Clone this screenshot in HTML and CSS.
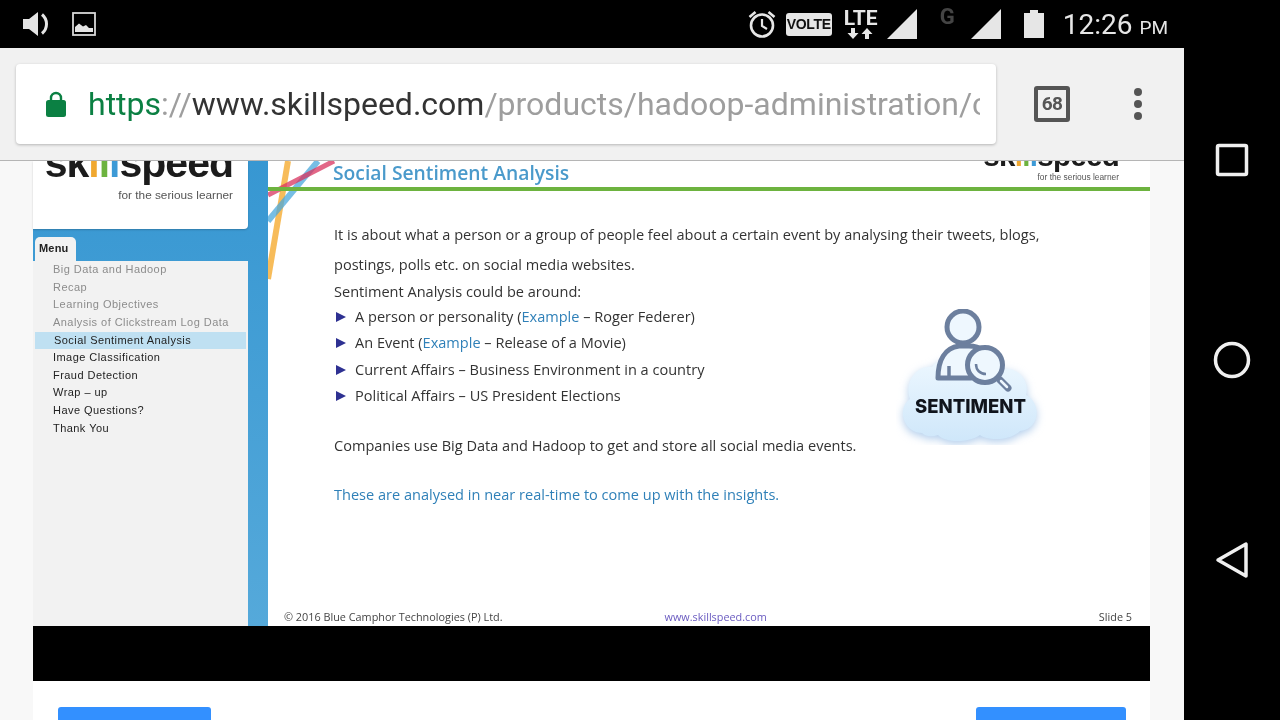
FILE: index.html
```html
<!DOCTYPE html>
<html lang="en">
<head>
    <meta charset="UTF-8">
    <meta name="viewport" content="width=device-width, initial-scale=1.0">
    <title>Skillspeed - Hadoop Administration</title>
    <link rel="stylesheet" href="styles.css">
</head>
<body>
    <div class="status-bar">
        <div class="status-left">
            <svg width="28" height="26" viewBox="0 0 28 26">
                <path d="M1 8h6l9-7v24l-9-7H1z" fill="#e4e4e4"/>
                <path d="M20 3.500c6 5 6 14 0 19" fill="none" stroke="#e4e4e4" stroke-width="3"/>
            </svg>
            <svg width="24" height="24" viewBox="0 0 24 24">
                <rect x="1" y="1" width="22" height="22" fill="none" stroke="#d8d8d8" stroke-width="1.800"/>
                <path d="M3 20v-5l4-3.500 4 3 3-1.500 3 3h4v4z" fill="#e4e4e4"/>
            </svg>
        </div>
        <div class="status-right">
            <svg class="ic-alarm" width="28" height="28" viewBox="0 0 28 28">
                <circle cx="14" cy="15.500" r="11" fill="none" stroke="#e6e6e6" stroke-width="2.600"/>
                <path d="M14 9v7l5 3" fill="none" stroke="#e6e6e6" stroke-width="2.200"/>
                <path d="M1.500 7l6-5M26.500 7l-6-5" fill="none" stroke="#e6e6e6" stroke-width="2.600"/>
            </svg>
            <span class="volte">VOLTE</span>
            <div class="lte">
                <span class="lte-text">LTE</span>
                <svg width="30" height="11" viewBox="0 0 30 11">
                    <path d="M5 0h4v5h3.500L7 11 1.500 5H5z" fill="#e6e6e6"/>
                    <path d="M23 11h-4V6h-3.500L21 0l5.500 6H23z" fill="#e6e6e6"/>
                </svg>
            </div>
            <svg class="ic-signal" width="30" height="30" viewBox="0 0 30 30">
                <path d="M0 30L30 0v30z" fill="#e6e6e6"/>
            </svg>
            <span class="net-g">G</span>
            <svg class="ic-signal2" width="30" height="30" viewBox="0 0 30 30">
                <path d="M0 30L30 0v30z" fill="#e6e6e6"/>
            </svg>
            <svg class="ic-battery" width="20" height="28" viewBox="0 0 20 28">
                <path d="M6 0h8v3h6v25H0V3h6z" fill="#e6e6e6"/>
            </svg>
            <span class="clock">12:26 <small>PM</small></span>
        </div>
    </div>

    <div class="main">
        <div class="browser">
            <div class="toolbar">
                <div class="omnibox">
                    <svg class="ic-lock" width="20" height="26" viewBox="0 0 20 26">
                        <path d="M5 10V7a5 5 0 0 1 10 0v3" fill="none" stroke="#0b8043" stroke-width="2.400"/>
                        <rect y="9" width="20" height="17" rx="2.500" fill="#0b8043"/>
                    </svg>
                    <div class="url"><span class="url-green">https</span><span class="url-grey">://</span>www.skillspeed.com<span class="url-grey">/products/hadoop-administration/c</span></div>
                </div>
                <div class="tab-count">68</div>
                <div class="menu-dots"><i></i><i></i><i></i></div>
            </div>

            <div class="page">
                <div class="player">
                    <div class="sidebar">
                        <div class="side-logo">
                            <div class="logo-big">sk<b class="c1">i</b><b class="c2">l</b><b class="c3">l</b>speed</div>
                            <div class="tagline">for the serious learner</div>
                        </div>
                        <div class="menu-tab">Menu</div>
                        <ul class="menu-list">
                            <li class="seen">Big Data and Hadoop</li>
                            <li class="seen">Recap</li>
                            <li class="seen">Learning Objectives</li>
                            <li class="seen">Analysis of Clickstream Log Data</li>
                            <li class="active">Social Sentiment Analysis</li>
                            <li>Image Classification</li>
                            <li>Fraud Detection</li>
                            <li>Wrap – up</li>
                            <li>Have Questions?</li>
                            <li>Thank You</li>
                        </ul>
                    </div>

                    <div class="slide">
                        <svg class="slide-lines" width="80" height="120" viewBox="0 0 80 120">
                            <path d="M20 0L0 118" stroke="#f5a623" stroke-width="6" opacity="0.75"/>
                            <path d="M50 0L0 60" stroke="#4aa8dc" stroke-width="6" opacity="0.75"/>
                            <path d="M66 0L0 34" stroke="#d9345f" stroke-width="5" opacity="0.75"/>
                        </svg>
                        <div class="slide-head">
                            <h1>Social Sentiment Analysis</h1>
                            <div class="head-logo">
                                <div class="logo-small">sk<b class="c1">i</b><b class="c2">l</b><b class="c3">l</b>speed</div>
                                <div class="tagline-small">for the serious learner</div>
                            </div>
                        </div>
                        <div class="slide-body">
                            <p class="intro">It is about what a person or a group of people feel about a certain event by analysing their tweets, blogs,<br>postings, polls etc. on social media websites.</p>
                            <p class="lead">Sentiment Analysis could be around:</p>
                            <ul class="points">
                                <li>A person or personality (<span class="blue">Example</span> – Roger Federer)</li>
                                <li>An Event (<span class="blue">Example</span> – Release of a Movie)</li>
                                <li>Current Affairs – Business Environment in a country</li>
                                <li>Political Affairs – US President Elections</li>
                            </ul>
                            <p class="companies">Companies use Big Data and Hadoop to get and store all social media events.</p>
                            <p class="insights">These are analysed in near real-time to come up with the insights.</p>

                            <svg class="sentiment" width="150" height="136" viewBox="0 0 150 136">
                                <defs>
                                    <linearGradient id="cloudFill" x1="0" y1="0" x2="0" y2="1">
                                        <stop offset="0" stop-color="#eef8ff"/>
                                        <stop offset="1" stop-color="#cfe7fa"/>
                                    </linearGradient>
                                    <filter id="soft" x="-20%" y="-20%" width="140%" height="140%">
                                        <feGaussianBlur stdDeviation="4"/>
                                    </filter>
                                </defs>
                                <path d="M26 127C8 127 0 103 14 93C8 77 20 59 36 61C44 47 90 43 108 63C122 61 134 75 130 89C146 97 144 123 124 125C114 135 92 135 84 129C72 137 50 137 42 129C36 131 30 131 26 127Z" fill="#b4cfec" filter="url(#soft)"/>
                                <path d="M26 124C8 124 0 100 14 90C8 74 20 56 36 58C44 44 90 40 108 60C122 58 134 72 130 86C146 94 144 120 124 122C114 132 92 132 84 126C72 134 50 134 42 126C36 128 30 128 26 124Z" fill="url(#cloudFill)"/>
                                <circle cx="67" cy="18" r="16" fill="#eef7fe" stroke="#6c7f9e" stroke-width="5"/>
                                <path d="M42 69c0-18 7-30 21-32h10c6 0 10 1 14 4-8 5-13 14-12 28z" fill="#eef7fe" stroke="#6c7f9e" stroke-width="5" stroke-linejoin="round"/>
                                <path d="M53 69v-12" stroke="#6c7f9e" stroke-width="3.500"/>
                                <circle cx="89" cy="56" r="17.500" fill="#eef7fe" stroke="#6c7f9e" stroke-width="5"/>
                                <path d="M80 55c0 6 4 10 10 10" fill="none" stroke="#6c7f9e" stroke-width="2.500"/>
                                <path d="M104 71l8 8" stroke="#6c7f9e" stroke-width="7" stroke-linecap="round"/>
                                <path d="M105 72l6 6" stroke="#eef7fe" stroke-width="2.500" stroke-linecap="round"/>
                                <text class="sentiment-text" x="74.500" y="104" text-anchor="middle" textLength="111" lengthAdjust="spacingAndGlyphs">SENTIMENT</text>
                            </svg>
                        </div>
                        <div class="slide-foot">
                            <span class="copy">© 2016 Blue Camphor Technologies (P) Ltd.</span>
                            <span class="site">www.skillspeed.com</span>
                            <span class="slide-no">Slide 5</span>
                        </div>
                    </div>
                </div>
                <div class="player-bar"></div>
                <div class="actions">
                    <div class="btn btn-left"></div>
                    <div class="btn btn-right"></div>
                </div>
            </div>
        </div>

        <div class="nav-bar">
            <svg width="34" height="34" viewBox="0 0 34 34">
                <rect x="2.500" y="2.500" width="29" height="29" rx="1.500" fill="none" stroke="#f0f0f0" stroke-width="3.500"/>
            </svg>
            <svg width="38" height="38" viewBox="0 0 38 38">
                <circle cx="19" cy="19" r="16.500" fill="none" stroke="#f0f0f0" stroke-width="3.500"/>
            </svg>
            <svg width="34" height="38" viewBox="0 0 34 38">
                <path d="M31 3v32L3 19z" fill="none" stroke="#f0f0f0" stroke-width="3.500" stroke-linejoin="round"/>
            </svg>
        </div>
    </div>
</body>
</html>
```

FILE: styles.css
```css
body {
    margin: 0;
    width: 1280px;
    height: 720px;
    overflow: hidden;
    background-color: #000;
    font-family: Roboto, sans-serif;
}

/* status bar */

.status-bar {
    height: 48px;
    display: flex;
    justify-content: space-between;
    align-items: center;
    padding: 0 112px 0 22px;
    color: #e6e6e6;
}

.status-left {
    display: flex;
    align-items: center;
    gap: 22px;
}

.status-right {
    display: flex;
    align-items: center;
}

.ic-alarm {
    margin-right: 10px;
}

.volte {
    width: 46px;
    height: 23px;
    background-color: #e6e6e6;
    border-radius: 3px;
    color: #111;
    font: bold 14px/23px "Liberation Sans", sans-serif;
    letter-spacing: -0.3px;
    text-align: center;
}

.lte {
    width: 34px;
    margin-left: 12px;
    display: flex;
    flex-direction: column;
    align-items: center;
}

.lte-text {
    font: bold 21px/19px "Roboto", sans-serif;
}

.ic-signal {
    margin-left: 9px;
}

.net-g {
    width: 16px;
    margin: -14px 0 0 23px;
    color: #444;
    font: bold 22px/22px "Roboto", sans-serif;
}

.ic-signal2 {
    margin-left: 15px;
}

.ic-battery {
    margin-left: 23px;
}

.clock {
    margin-left: 19px;
    font-size: 28px;
    font-weight: 400;
    white-space: nowrap;
}

.clock small {
    font-size: 19px;
}

/* browser */

.main {
    display: flex;
    height: 672px;
}

.browser {
    width: 1184px;
    display: flex;
    flex-direction: column;
}

.toolbar {
    height: 112px;
    flex-shrink: 0;
    display: flex;
    align-items: center;
    padding-left: 16px;
    background-color: #f1f1f1;
    border-bottom: 1px solid #b5b5b5;
}

.omnibox {
    width: 980px;
    height: 80px;
    box-sizing: border-box;
    display: flex;
    align-items: center;
    padding: 0 16px 0 30px;
    background-color: #fff;
    border-radius: 4px;
    box-shadow: 0 1px 3px rgba(0, 0, 0, 0.25);
}

.ic-lock {
    flex-shrink: 0;
    margin-right: 22px;
}

.url {
    overflow: hidden;
    white-space: nowrap;
    font-size: 32px;
    color: #333;
}

.url-green {
    color: #0b8043;
}

.url-grey {
    color: #9e9e9e;
}

.tab-count {
    width: 36px;
    height: 36px;
    box-sizing: border-box;
    margin-left: 38px;
    border: 4px solid #555;
    border-radius: 3px;
    color: #555;
    font: bold 19px/28px "Roboto", sans-serif;
    letter-spacing: -0.6px;
    text-align: center;
}

.menu-dots {
    margin-left: 64px;
    display: flex;
    flex-direction: column;
    gap: 4px;
}

.menu-dots i {
    width: 8px;
    height: 8px;
    border-radius: 50%;
    background-color: #555;
}

/* page */

.page {
    flex: 1;
    display: flex;
    flex-direction: column;
    padding: 0 34px 0 33px;
    background-color: #f8f8f8;
}

.player {
    height: 465px;
    flex-shrink: 0;
    display: flex;
}

.player-bar {
    height: 55px;
    flex-shrink: 0;
    background-color: #000;
}

.actions {
    flex: 1;
    display: flex;
    justify-content: space-between;
    padding: 26px 24px 0 25px;
    background-color: #fff;
}

.btn {
    background-color: #3390ff;
    border-radius: 3px 3px 0 0;
}

.btn-left {
    width: 153px;
}

.btn-right {
    width: 150px;
}

/* player sidebar */

.sidebar {
    width: 235px;
    flex-shrink: 0;
    padding-right: 20px;
    box-sizing: border-box;
    display: flex;
    flex-direction: column;
    background: linear-gradient(#3797d2, #55a9da);
}

.side-logo {
    height: 68px;
    flex-shrink: 0;
    box-sizing: border-box;
    overflow: hidden;
    display: flex;
    flex-direction: column;
    justify-content: flex-end;
    align-items: flex-end;
    padding: 0 15px 27px 0;
    background-color: #fff;
    border-radius: 0 0 4px 0;
    box-shadow: 0 1px 2px rgba(0, 0, 0, 0.2);
}

.logo-big {
    font: bold 41px/36px "Liberation Sans", sans-serif;
    letter-spacing: -1px;
    color: #1c1c1c;
    white-space: nowrap;
}

.logo-big b,
.logo-small b {
    font-weight: bold;
}

.c1 {
    color: #f0a830;
}

.c2 {
    color: #6db33f;
}

.c3 {
    color: #3d9ad6;
}

.tagline {
    margin-top: 7px;
    font: 11.800px/14px "Liberation Sans", sans-serif;
    color: #555;
}

.menu-tab {
    width: 41px;
    height: 24px;
    box-sizing: border-box;
    margin: 8px 0 0 2px;
    padding: 3px 0 0 4px;
    background-color: #f2f2f2;
    border-radius: 5px 5px 0 0;
    color: #222;
    font: bold 11px/16px "Liberation Sans", sans-serif;
    letter-spacing: 0.2px;
}

.menu-list {
    flex: 1;
    list-style: none;
    margin: 0;
    padding: 0 2px 0 2px;
    background-color: #f2f2f2;
    font: 11px/17.650px "Liberation Sans", sans-serif;
    letter-spacing: 0.45px;
    color: #222;
}

.menu-list li {
    height: 17.650px;
    padding-left: 18px;
    white-space: nowrap;
}

.menu-list .seen {
    color: #8c8c8c;
}

.menu-list .active {
    background-color: #bfe0f2;
    padding-left: 19px;
}

/* slide */

.slide {
    flex: 1;
    position: relative;
    display: flex;
    flex-direction: column;
    background-color: #fff;
    font-family: "Open Sans", sans-serif;
    color: #333;
}

.slide-lines {
    position: absolute;
    left: 0;
    top: 0;
    mix-blend-mode: multiply;
}

.slide-head {
    height: 30px;
    flex-shrink: 0;
    box-sizing: border-box;
    display: flex;
    justify-content: space-between;
    padding: 0 31px 0 65px;
    border-bottom: 4px solid #6db33f;
    position: relative;
}

.slide-head h1 {
    margin: 0;
    font-size: 19.300px;
    line-height: 24px;
    font-weight: 600;
    color: #4a9acb;
}

.head-logo {
    overflow: hidden;
    display: flex;
    flex-direction: column;
    justify-content: flex-end;
    align-items: flex-end;
    padding-bottom: 4px;
}

.logo-small {
    font: bold 29.500px/24px "Liberation Sans", sans-serif;
    letter-spacing: -0.7px;
    color: #1c1c1c;
    white-space: nowrap;
}

.tagline-small {
    margin-top: 4px;
    font: 8.400px/11px "Liberation Sans", sans-serif;
    color: #555;
}

.slide-body {
    flex: 1;
    position: relative;
    padding: 28px 0 0 66px;
    font-size: 14.560px;
}

.slide-body p {
    margin: 0;
}

.slide-body .intro {
    line-height: 30px;
}

.slide-body .lead {
    line-height: 24px;
}

.points {
    list-style: none;
    margin: 0;
    padding: 0;
}

.points li {
    height: 26.300px;
    line-height: 26px;
    padding-left: 21px;
    position: relative;
}

.points li::before {
    content: "";
    position: absolute;
    left: 2px;
    top: 9px;
    border-left: 10px solid #2e3192;
    border-top: 5px solid transparent;
    border-bottom: 5px solid transparent;
}

.blue {
    color: #2f80b8;
}

.slide-body .companies {
    margin-top: 24px;
    line-height: 26px;
}

.slide-body .insights {
    margin-top: 23px;
    line-height: 26px;
    color: #2f80b8;
}

.sentiment {
    position: absolute;
    left: 628px;
    top: 118px;
}

.sentiment-text {
    font-family: Inter, sans-serif;
    font-weight: 800;
    font-size: 19px;
    fill: #10141c;
}

.slide-foot {
    height: 24px;
    flex-shrink: 0;
    box-sizing: border-box;
    display: flex;
    justify-content: space-between;
    align-items: center;
    padding: 4px 18px 0 16px;
    font-size: 10.850px;
    color: #444;
}

.site {
    color: #6a5bc0;
    margin-right: 170px;
}

/* android nav */

.nav-bar {
    width: 96px;
    display: grid;
    grid-template-rows: repeat(3, 200px);
    justify-items: center;
    align-items: center;
    padding-top: 12px;
    box-sizing: border-box;
}
```
